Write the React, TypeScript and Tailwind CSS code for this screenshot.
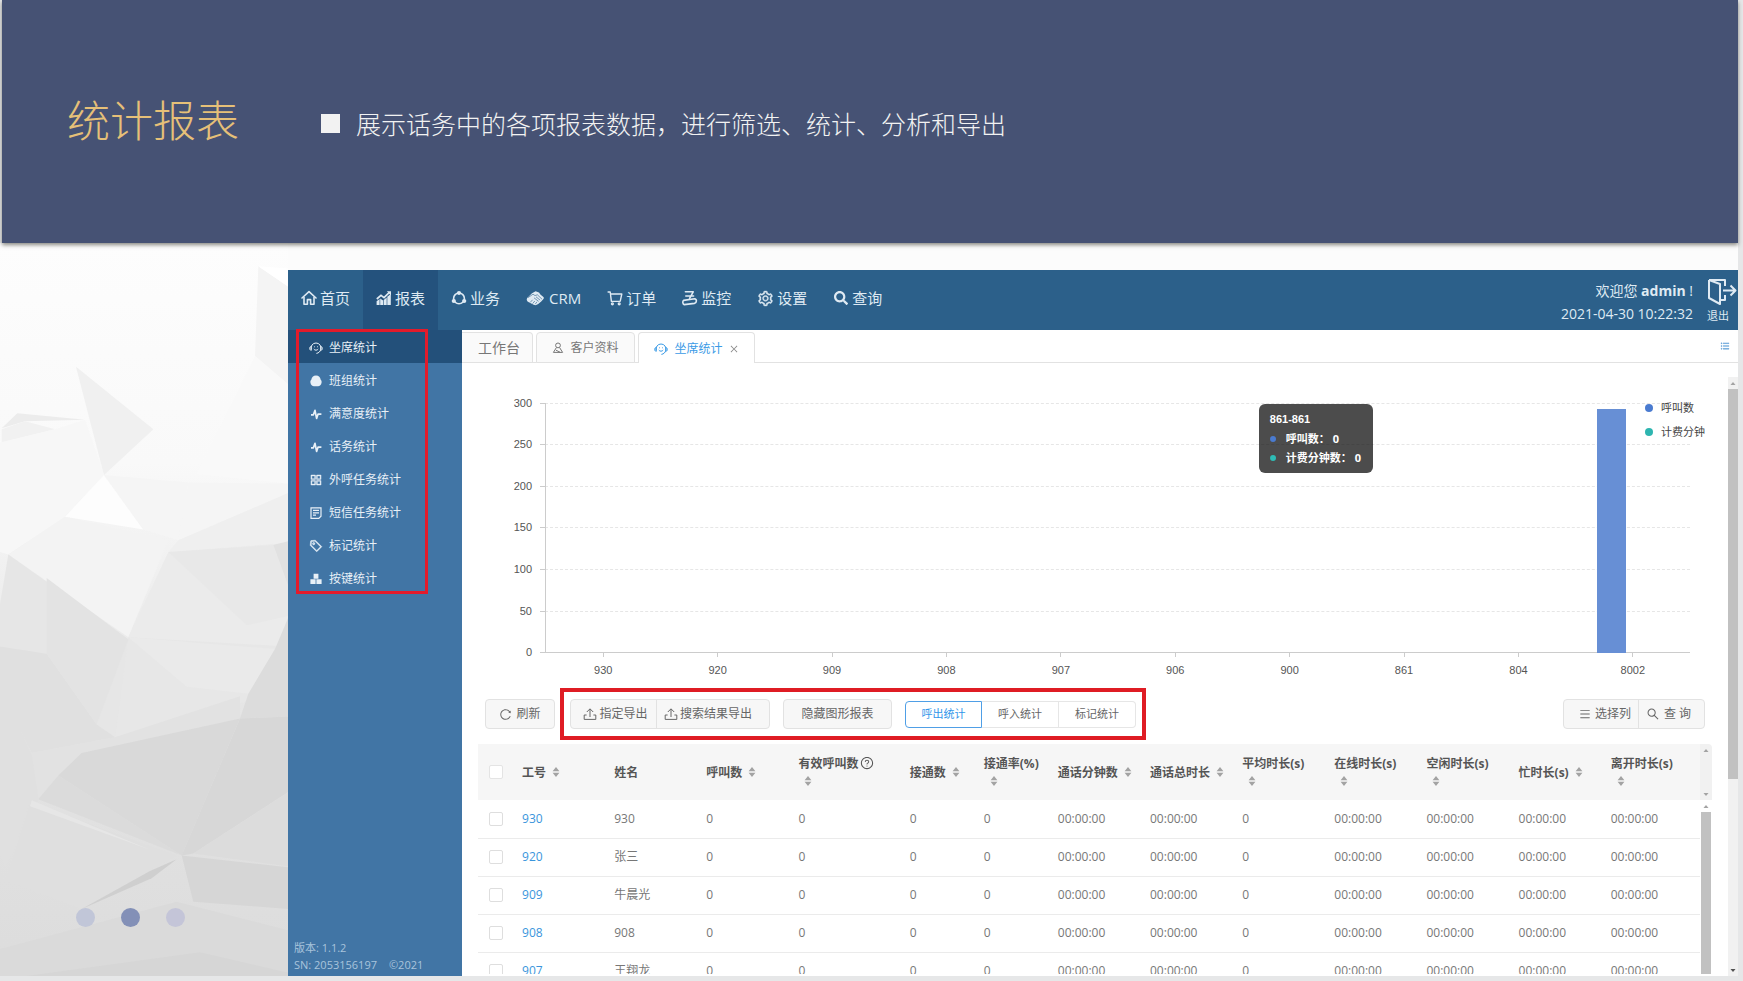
import type { ReactNode } from "react";
import {
  AiOutlineAppstore,
  AiOutlineClose,
  AiOutlineMenu,
  AiOutlineQuestionCircle,
  AiOutlineReload,
  AiOutlineSearch,
  AiOutlineSetting,
  AiOutlineTag,
  AiOutlineUnorderedList,
} from "react-icons/ai";
import { FaSearch } from "react-icons/fa";

function HomeIcon() {
  return (
    <svg viewBox="0 0 16 16" className="size-4" fill="none" stroke="currentColor" strokeWidth="1.6" strokeLinejoin="round">
      <path d="M1 8 8 1.6 15 8" strokeLinecap="round" />
      <path d="M3 7v7.2h3.4V9.6h3.2v4.6H13V7" />
    </svg>
  );
}

function ReportIcon() {
  return (
    <svg viewBox="0 0 16 16" className="size-4" fill="currentColor">
      <path d="M.6 11.2 3.6 9V15H.6zM4.2 8.6 7.1 10.4V15H4.2zM7.7 10l3-2.6V15h-3zM11.3 6.800 14.800 4v11h-3.500z" />
      <path d="M.8 9 5 5.4l3 2.2L13.4 2.4" fill="none" stroke="currentColor" strokeWidth="1.7" />
      <path d="M10.8 1.200H15v4.200z" />
    </svg>
  );
}

function BusinessIcon() {
  return (
    <svg viewBox="0 0 16 16" className="size-4" fill="currentColor">
      <circle cx="8" cy="8.4" r="5.4" fill="none" stroke="currentColor" strokeWidth="1.6" />
      <circle cx="8" cy="3" r="2.1" />
      <circle cx="2.8" cy="11" r="2.1" />
      <circle cx="13.2" cy="11" r="2.1" />
    </svg>
  );
}

function HandshakeIcon() {
  return (
    <svg viewBox="0 0 18 16" className="mr-0.5 h-4 w-[18px]" fill="currentColor">
      <path d="M6 3.2 9.6 1.2l3.4 1.2 1.4 2.2 3 2.400c.6.6.6 1.400 0 2l-2.200 2.400-3 2.600c-1.200 1-2.600 1.400-4 1L2.800 12.200C.8 11.400.2 9.400 1.200 8z" />
      <path d="M2 7.600l5-3.400 2 1.400 2.400-.8 4.600 4.400M4.200 12.400l2.400-2.600M6.600 13.600l2.200-2.600M9.200 14.200l1.800-2.400M8 7.800l4.600 3.600M10 6.800l4.200 3.400" fill="none" stroke="#2c608a" strokeWidth=".6" />
    </svg>
  );
}

function CartIcon() {
  return (
    <svg viewBox="0 0 16 16" className="size-4" fill="none" stroke="currentColor" strokeWidth="1.4" strokeLinejoin="round">
      <path d="M.6 2h2.600l1.200 9.400h9M3.600 4h11.200l-1.600 7.400" />
      <circle cx="5.4" cy="13.8" r=".9" />
      <circle cx="12.2" cy="13.8" r=".9" />
    </svg>
  );
}

function MonitorIcon() {
  return (
    <svg viewBox="0 0 16 16" className="size-4" fill="none" stroke="currentColor" strokeWidth="1.6" strokeLinejoin="round" strokeLinecap="round">
      <path d="M3.4 1.8h7.8L7.6 8.4M3.8 6h7.8" />
      <path d="M1.6 10.4 12.6 8.8c2.400 0 2.400 4-.2 4.600L2.200 14.600c-1.600-.4-1.800-3.400-.6-4.200z" />
    </svg>
  );
}

function LogoutIcon() {
  return (
    <svg viewBox="0 0 30 28" className="h-7 w-[30px]" fill="none" stroke="currentColor" strokeWidth="2" strokeLinejoin="round">
      <path d="M2 2h16v6M18 17v5h-5M2 2v18l11 6V6L2 2" />
      <path d="M16 12.5h12M23.5 7.5l5 5-5 5" />
    </svg>
  );
}

function AgentIcon() {
  return (
    <svg viewBox="0 0 14 14" className="size-3.5" fill="none" stroke="currentColor" strokeWidth="1">
      <path d="M2.2 8.4a5 5 0 1 1 9.6 0c-.6 2.200-2 3.600-4.400 4" />
      <path d="M2.2 5.400C.2 5.800.2 9 2.200 9.400zM11.800 5.400c2 .4 2 3.600 0 4z" />
      <path d="M4.8 8c1 1.600 3.400 1.600 4.400 0M5 5.800h.8M8.200 5.800H9" />
    </svg>
  );
}

function GroupIcon() {
  return (
    <svg viewBox="0 0 14 14" className="size-3.5" fill="currentColor">
      <path d="M7 1.400c2.800 0 4.400 1.600 4.600 4.200.8.8 1.200 1.800 1 3C12.200 11.200 10.800 12.200 9 12.200H5c-1.800 0-3.200-1-3.600-3.600-.2-1.200.2-2.200 1-3C2.600 3 4.200 1.400 7 1.400z" />
    </svg>
  );
}

function PulseIcon() {
  return (
    <svg viewBox="0 0 14 14" className="size-3.5" fill="none" stroke="currentColor" strokeWidth="1.7" strokeLinejoin="round">
      <path d="M2 7.8h2.400L6 3.400 7.600 11.400l1.400-4.200h3.400" />
    </svg>
  );
}

function SmsIcon() {
  return (
    <svg viewBox="0 0 14 14" className="size-3.5" fill="none" stroke="currentColor" strokeWidth="1.2">
      <path d="M2 1.8h10v8.400L9.800 12.400H2zM4 4.400h6M4 6.800h6M4 9.200h3" />
    </svg>
  );
}

function KeysIcon() {
  return (
    <svg viewBox="0 0 14 14" className="size-3.5" fill="currentColor">
      <path d="M4.6 1.8h4.800V6.800H4.600zM1.400 7.200h5.200V12H1.400zM7.400 7.200h5.200V12H7.400z" />
    </svg>
  );
}

function UserIcon() {
  return (
    <svg viewBox="0 0 12 12" className="size-3" fill="none" stroke="currentColor" strokeWidth="1">
      <circle cx="6" cy="3.4" r="2.4" />
      <path d="M4.4 5.6 1.4 10.4h9.200L7.600 5.600M4 8.200l4 2" />
    </svg>
  );
}

function ExportIcon() {
  return (
    <svg viewBox="0 0 14 14" className="size-3.5" fill="none" stroke="currentColor" strokeWidth="1">
      <path d="M7 10V2M3.8 5 7 1.800 10.200 5M3.600 8H1.200v4.400h11.600V8h-2.400" />
    </svg>
  );
}

function SortIcon() {
  return (
    <svg viewBox="0 0 8 10" className="ml-1.5 inline-block h-2.5 w-2 align-[0px]" fill="#a3a3a3">
      <path d="M4 0 7.4 4.2H.6zM4 10 .6 5.8h6.800z" />
    </svg>
  );
}

function Arrow({ down = false, dark = false }: { down?: boolean; dark?: boolean }) {
  return (
    <svg viewBox="0 0 10 12" className="h-3 w-2.5 shrink-0" fill={dark ? "#505050" : "#a3a3a3"}>
      <path d={down ? "M2.5 5h5L5 8z" : "M2.5 8h5L5 5z"} />
    </svg>
  );
}

const navItems: { label: string; icon: ReactNode }[] = [
  { label: "首页", icon: <HomeIcon /> },
  { label: "报表", icon: <ReportIcon /> },
  { label: "业务", icon: <BusinessIcon /> },
  { label: "CRM", icon: <HandshakeIcon /> },
  { label: "订单", icon: <CartIcon /> },
  { label: "监控", icon: <MonitorIcon /> },
  { label: "设置", icon: <AiOutlineSetting className="size-[17px] stroke-current stroke-[24]" /> },
  { label: "查询", icon: <FaSearch className="size-4 p-px" /> },
];

const sideItems: { label: string; icon: ReactNode }[] = [
  { label: "坐席统计", icon: <AgentIcon /> },
  { label: "班组统计", icon: <GroupIcon /> },
  { label: "满意度统计", icon: <PulseIcon /> },
  { label: "话务统计", icon: <PulseIcon /> },
  { label: "外呼任务统计", icon: <AiOutlineAppstore className="size-3.5 stroke-current stroke-[30]" /> },
  { label: "短信任务统计", icon: <SmsIcon /> },
  { label: "标记统计", icon: <AiOutlineTag className="size-3.5 -scale-x-100 stroke-current stroke-[30]" /> },
  { label: "按键统计", icon: <KeysIcon /> },
];

const yTicks = [300, 250, 200, 150, 100, 50, 0];

const bars = [
  { label: "930", value: 0 },
  { label: "920", value: 0 },
  { label: "909", value: 0 },
  { label: "908", value: 0 },
  { label: "907", value: 0 },
  { label: "906", value: 0 },
  { label: "900", value: 0 },
  { label: "861", value: 0 },
  { label: "804", value: 0 },
  { label: "8002", value: 293 },
];

const columns: { label: string; sort?: boolean; wrap?: boolean; help?: boolean; width: string }[] = [
  { label: "工号", sort: true, width: "w-[92px]" },
  { label: "姓名", width: "w-[92px]" },
  { label: "呼叫数", sort: true, width: "w-[92px]" },
  { label: "有效呼叫数", sort: true, wrap: true, help: true, width: "w-[111px]" },
  { label: "接通数", sort: true, width: "w-[74px]" },
  { label: "接通率(%)", sort: true, wrap: true, width: "w-[74px]" },
  { label: "通话分钟数", sort: true, width: "w-[92px]" },
  { label: "通话总时长", sort: true, width: "w-[92px]" },
  { label: "平均时长(s)", sort: true, wrap: true, width: "w-[92px]" },
  { label: "在线时长(s)", sort: true, wrap: true, width: "w-[92px]" },
  { label: "空闲时长(s)", sort: true, wrap: true, width: "w-[92px]" },
  { label: "忙时长(s)", sort: true, width: "w-[92px]" },
  { label: "离开时长(s)", sort: true, wrap: true, width: "w-[99px]" },
];

const zero = "00:00:00";
const rows = [
  ["930", "930"],
  ["920", "张三"],
  ["909", "牛晨光"],
  ["908", "908"],
  ["907", "王翔龙"],
].map(([id, name]) => [id, name, "0", "0", "0", "0", zero, zero, "0", zero, zero, zero, zero]);

function Backdrop() {
  return (
    <svg viewBox="0 6 864 1551" preserveAspectRatio="none" className="absolute inset-y-0 left-0 h-full w-[288px]" aria-hidden="true">
      <defs>
        <linearGradient id="paper" x1="0" y1="0" x2="0" y2="1">
          <stop offset="0" stopColor="#fdfdfd" />
          <stop offset="0.3" stopColor="#f9f9f9" />
          <stop offset="0.45" stopColor="#f0f0f0" />
          <stop offset="0.65" stopColor="#e4e4e4" />
          <stop offset="1" stopColor="#dcdcdc" />
        </linearGradient>
      </defs>
      <rect y="6" width="864" height="1551" fill="url(#paper)" />
      <path d="M775 55 864 98V305L765 245z" fill="#f4f4f4" />
      <path d="M775 55 864 98V60z" fill="#fff" />
      <path d="M765 245 864 305V515L590 495z" fill="#f9f9f9" />
      <path d="M228 268 460 400 312 497z" fill="#f0f0f0" />
      <path d="M5 398 52 366 255 380 75 383z" fill="#ececec" />
      <path d="M5 428V400L75 383 165 400z" fill="#f1f1f1" />
      <path d="M0 428 165 400 255 380 312 497 195 585 25 665 0 660z" fill="#f7f7f7" />
      <path d="M312 497 430 612 195 585z" fill="#fdfdfd" />
      <path d="M312 497 565 513 535 635 430 612z" fill="#f5f5f5" />
      <path d="M565 513 864 515V535L535 635z" fill="#f5f5f5" />
      <path d="M535 635 864 535V640L505 660z" fill="#efefef" />
      <path d="M195 585 505 635 385 840 25 665z" fill="#f3f3f3" />
      <path d="M505 660 864 640V880L385 840z" fill="#ebebeb" />
      <path d="M505 660 820 645 864 730V795L740 815z" fill="#e8e8e8" />
      <path d="M820 645 864 637V730z" fill="#e1e1e1" />
      <path d="M385 840 864 860 800 965 345 1052z" fill="#e7e7e7" />
      <path d="M385 840 825 865 745 960 560 945z" fill="#eaeaea" />
      <path d="M25 665 385 845 345 1052 95 1085 0 940V770z" fill="#e6e6e6" />
      <path d="M0 860 140 875 290 1025 345 1052 95 1085 0 950z" fill="#e0e0e0" />
      <path d="M140 715 385 845 290 1025 140 875z" fill="#e3e3e3" />
      <path d="M825 865 864 800V1008L720 1012 745 960z" fill="#dcdcdc" />
      <path d="M345 1052 720 965V1012L245 1085 115 1180 95 1085z" fill="#e2e2e2" />
      <path d="M245 1085 720 1012 545 1302 175 1133z" fill="#d9d9d9" />
      <path d="M720 1012 864 1008V1168L580 1298 545 1302z" fill="#d7d7d7" />
      <path d="M175 1133 545 1302 115 1183z" fill="#dbdbdb" />
      <path d="M95 1090 115 1183 15 1330 0 1300V940z" fill="#e0e0e0" />
      <path d="M90 1190 530 1302 245 1415 15 1355z" fill="#dfdfdf" />
      <path d="M95 1185 330 1255 450 1290 90 1198z" fill="#e6e6e6" />
      <path d="M580 1298 864 1168V1325z" fill="#dcdcdc" />
      <path d="M545 1302 864 1327V1415L580 1400z" fill="#d6d6d6" />
      <path d="M530 1310 455 1350 245 1415 450 1335z" fill="#cfcfcf" />
      <path d="M0 1500 530 1400 864 1460V1557H0z" fill="#dadada" />
      <path d="M80 1557 600 1507 864 1550V1557z" fill="#d6d6d6" />
    </svg>
  );
}

function Chart() {
  return (
    <div className="flex pt-10 pr-[38px] pl-[30px]">
      <div className="flex h-[250px] w-10 flex-col justify-between text-right font-['Liberation_Sans',sans-serif] text-[11px] leading-none text-[#555]">
        {yTicks.map((t) => (
          <span key={t} className="flex h-0 items-center justify-end">{t}</span>
        ))}
      </div>
      <div className="ml-2 min-w-0 flex-1">
        <div className="relative h-[250px]">
          <div className="absolute inset-0 flex flex-col justify-between">
            {yTicks.map((t) => (
              <div key={t} className="flex h-0 items-center">
                <span className="h-px w-[5px] bg-[#ccc]" />
                <span className={t === 0 ? "flex-1 border-t border-[#ccc]" : "flex-1 border-t border-dashed border-[#e6e6e6]"} />
              </div>
            ))}
          </div>
          <div className="relative ml-[5px] flex h-full border-l border-[#ccc]">
            {bars.map((b) => (
              <div key={b.label} className="flex h-full flex-1 items-end pl-[21px]">
                <span className="w-[29px] bg-[#678fd5]" style={{ height: `${(b.value / 300) * 100}%` }} />
              </div>
            ))}
          </div>
          <div className="absolute top-px right-[317px] flex flex-col rounded-md bg-black/70 py-1.5 pr-3 pl-[11px] text-[11px] leading-[19px] font-bold text-white">
            <span className="font-['Liberation_Sans',sans-serif]">861-861</span>
            <span className="flex items-center gap-2.5">
              <i className="size-1.5 rounded-full bg-[#4a7bd0]" />呼叫数： 0
            </span>
            <span className="flex items-center gap-2.5">
              <i className="size-1.5 rounded-full bg-[#2ebcb5]" />计费分钟数： 0
            </span>
          </div>
          <ul className="absolute top-[-7px] right-[-15px] flex flex-col text-[11px] leading-6 text-[#444]">
            <li className="flex items-center gap-2">
              <i className="size-2 rounded-full bg-[#4a7bd0]" />呼叫数
            </li>
            <li className="flex items-center gap-2">
              <i className="size-2 rounded-full bg-[#2eb5b0]" />计费分钟
            </li>
          </ul>
        </div>
        <div className="ml-1.5 flex font-['Liberation_Sans',sans-serif] text-[11px] leading-none text-[#555]">
          {bars.map((b) => (
            <span key={b.label} className="flex flex-1 flex-col items-center gap-2">
              <i className="h-1 w-px bg-[#ccc]" />
              {b.label}
            </span>
          ))}
        </div>
      </div>
    </div>
  );
}

function Toolbar() {
  const plain = "flex h-full items-center justify-center";
  return (
    <div className="flex items-center justify-between pr-[23px] pl-[23px] text-xs text-[#666]">
      <div className="flex items-center">
        <button className="flex h-[30px] w-[70px] items-center justify-center gap-1 rounded border border-[#e2e2e2] bg-[#f7f7f7]">
          <AiOutlineReload className="size-[13px]" />
          刷新
        </button>
        <div className="ml-[5px] flex h-[52px] items-center border-4 border-[#df1c24] pr-1.5 pl-1.5">
          <div className="flex h-[30px] rounded border border-[#e2e2e2] bg-[#f7f7f7]">
            <button className={`${plain} w-[86px] gap-0.5 border-r border-[#e2e2e2] pl-1`}>
              <ExportIcon />
              指定导出
            </button>
            <button className={`${plain} w-[112px] gap-0.5 pr-2.5`}>
              <ExportIcon />
              搜索结果导出
            </button>
          </div>
          <button className="ml-[13px] h-[30px] w-[109px] rounded border border-[#e2e2e2] bg-[#f7f7f7]">
            隐藏图形报表
          </button>
          <div className="ml-[13px] flex h-[27px] text-[11px]">
            <button className="w-[77px] rounded-l border border-[#4f9fe6] text-[#3296ea]">呼出统计</button>
            <button className="w-[77px] border-y border-r border-[#e6e6e6]">呼入统计</button>
            <button className="w-[77px] rounded-r border-y border-r border-[#e6e6e6]">标记统计</button>
          </div>
        </div>
      </div>
      <div className="flex h-[30px] rounded border border-[#e2e2e2] bg-[#f7f7f7]">
        <button className={`${plain} w-[75px] gap-1 border-r border-[#e2e2e2] pl-2`}>
          <AiOutlineMenu className="size-3" />
          选择列
        </button>
        <button className={`${plain} w-[65px] gap-1 pr-1.5`}>
          <AiOutlineSearch className="size-3.5" />
          查 询
        </button>
      </div>
    </div>
  );
}

function Report() {
  return (
    <div className="mt-1 mr-4 ml-4 flex min-h-0 flex-1 overflow-hidden">
      <div className="min-w-0 flex-1 overflow-hidden">
        <table className="w-full table-fixed text-left text-xs text-[#777]">
          <thead>
            <tr className="h-14 bg-[#f6f6f6] text-[#555]">
              <th className="w-[34px] pl-[11px]">
                <input type="checkbox" aria-label="全选" className="block size-3.5 appearance-none rounded-xs border border-[#e4e4e4] bg-white" />
              </th>
              {columns.map((c) => (
                <th key={c.label} className={`${c.width} pt-0.5 pl-2.5 leading-[18px] font-bold whitespace-nowrap`}>
                  {c.label}
                  {c.help && <AiOutlineQuestionCircle className="ml-0.5 inline size-3.5 align-[-2px]" />}
                  {c.wrap && <br />}
                  {c.sort && <SortIcon />}
                </th>
              ))}
            </tr>
          </thead>
          <tbody>
            {rows.map((r) => (
              <tr key={r[0]} className="h-[38px] border-b border-[#ebebeb]">
                <td className="pl-[11px]">
                  <input type="checkbox" aria-label={r[0]} className="block size-3.5 appearance-none rounded-xs border border-[#dedede] bg-white" />
                </td>
                {r.map((v, i) => (
                  <td key={i} className="pl-2.5 whitespace-nowrap">
                    {i === 0 ? <a href="#" className="text-[#3b95dc]">{v}</a> : v}
                  </td>
                ))}
              </tr>
            ))}
          </tbody>
        </table>
      </div>
      <div className="flex w-3 flex-col items-center">
        <div className="flex h-14 w-full shrink-0 flex-col items-center justify-between rounded-tr bg-[#f1f1f1]">
          <Arrow />
          <Arrow down />
        </div>
        <Arrow />
        <div className="w-2.5 flex-1 bg-[#c1c1c1]" />
      </div>
    </div>
  );
}

export default function App() {
  return (
    <div className="flex h-screen flex-col overflow-hidden bg-[#e6e7e8] font-['Open_Sans','Noto_Sans_CJK_SC',sans-serif]">
      <header className="relative z-10 mr-[5px] ml-0.5 flex h-[243px] shrink-0 items-center gap-[82px] bg-[#465274] pb-1.5 pl-[65px] shadow-[0_2px_4px_rgba(60,60,50,0.6)]">
        <h1 className="font-['Noto_Sans_CJK_SC',sans-serif] text-[43px] font-light text-[#e6c078]">统计报表</h1>
        <p className="mt-2.5 flex items-center gap-4 font-['Noto_Sans_CJK_SC',sans-serif] text-[25px] font-light text-[#f2f2f2]">
          <i className="size-[19px] bg-[#f2f2f2]" />
          展示话务中的各项报表数据，进行筛选、统计、分析和导出
        </p>
      </header>

      <main className="relative mr-[5px] mb-[5px] flex min-h-0 flex-1 bg-[#fcfcfc] pt-[27px]">
        <Backdrop />
        <div className="relative flex w-[288px] shrink-0 items-end gap-[26px] pb-[49px] pl-[76px]">
          <button aria-label="1" className="size-[19px] rounded-full bg-[#c1c6d8]" />
          <button aria-label="2" className="size-[19px] rounded-full bg-[#8390b7]" />
          <button aria-label="3" className="size-[19px] rounded-full bg-[#c4c5d8]" />
        </div>

        <div className="relative flex min-w-0 flex-1 flex-col bg-white">
          <nav className="flex h-[60px] shrink-0 justify-between bg-[#2c608a] text-[#dfeaf3]">
            <div className="flex text-[15px]">
              {navItems.map((n, i) => (
                <a key={n.label} href="#" className={`flex items-center gap-[3px] px-[13px] pb-1 ${i === 1 ? "bg-[#24527d]" : ""}`}>
                  {n.icon}
                  {n.label}
                </a>
              ))}
            </div>
            <div className="flex gap-3.5">
              <div className="pt-[9px] text-right text-sm leading-[23px]">
                <p>欢迎您 <b>admin</b> !</p>
                <p>2021-04-30 10:22:32</p>
              </div>
              <button className="flex w-[31px] flex-col items-start gap-0.5 pt-2 text-[11px] leading-4">
                <LogoutIcon />
                退出
              </button>
            </div>
          </nav>

          <div className="flex min-h-0 flex-1">
            <aside className="relative flex w-[174px] shrink-0 flex-col justify-between bg-[#4175a5] text-xs text-[#e8f0f7]">
              <ul>
                {sideItems.map((s, i) => (
                  <li key={s.label} className={i === 0 ? "bg-[#23507a]" : ""}>
                    <a href="#" className="flex h-[33px] items-center gap-1.5 pt-0.5 pl-[21px]">
                      {s.icon}
                      {s.label}
                    </a>
                  </li>
                ))}
              </ul>
              <div className="absolute top-[-1px] left-2 h-[265px] w-[132px] border-[3px] border-[#e31b2b]" />
              <div className="pb-[3px] pl-1.5 text-[11px] leading-[17px] text-[#a9c4dc]">
                <p>版本: 1.1.2</p>
                <p className="flex gap-3"><span>SN: 2053156197</span><span>©2021</span></p>
              </div>
            </aside>

            <div className="flex min-w-0 flex-1 flex-col">
              <div className="flex h-[33px] shrink-0 items-end justify-between border-b border-[#e2e2e2]">
                <div className="-mb-px flex h-[31px] gap-[3px] text-xs text-[#777]">
                  <button className="w-[71px] rounded-tr border border-l-0 border-[#e2e2e2] bg-[#fafafa] pl-1 text-sm leading-none">工作台</button>
                  <button className="flex w-[99px] items-center justify-center gap-1.5 rounded-t border border-[#e2e2e2] bg-[#fafafa] pt-px">
                    <UserIcon />
                    客户资料
                  </button>
                  <button className="flex w-[117px] items-center justify-center gap-1.5 rounded-t border border-b-0 border-[#e2e2e2] bg-white pt-px text-[#3b9be6]">
                    <AgentIcon />
                    坐席统计
                    <AiOutlineClose className="size-2.5 text-[#888]" />
                  </button>
                </div>
                <button aria-label="列表" className="mr-2 self-center text-[#4f96d4]">
                  <AiOutlineUnorderedList className="size-2.5 stroke-current stroke-[40]" />
                </button>
              </div>

              <div className="flex min-h-0 flex-1">
                <div className="flex min-w-0 flex-1 flex-col pb-0.5">
                  <Chart />
                  <div className="mt-3">
                    <Toolbar />
                  </div>
                  <Report />
                </div>
                <div className="mt-3.5 flex w-2.5 flex-col bg-[#f1f1f1]">
                  <Arrow />
                  <div className="flex-[389] bg-[#c1c1c1]" />
                  <div className="flex-[185]" />
                  <Arrow down dark />
                </div>
              </div>
            </div>
          </div>
        </div>
      </main>
    </div>
  );
}
